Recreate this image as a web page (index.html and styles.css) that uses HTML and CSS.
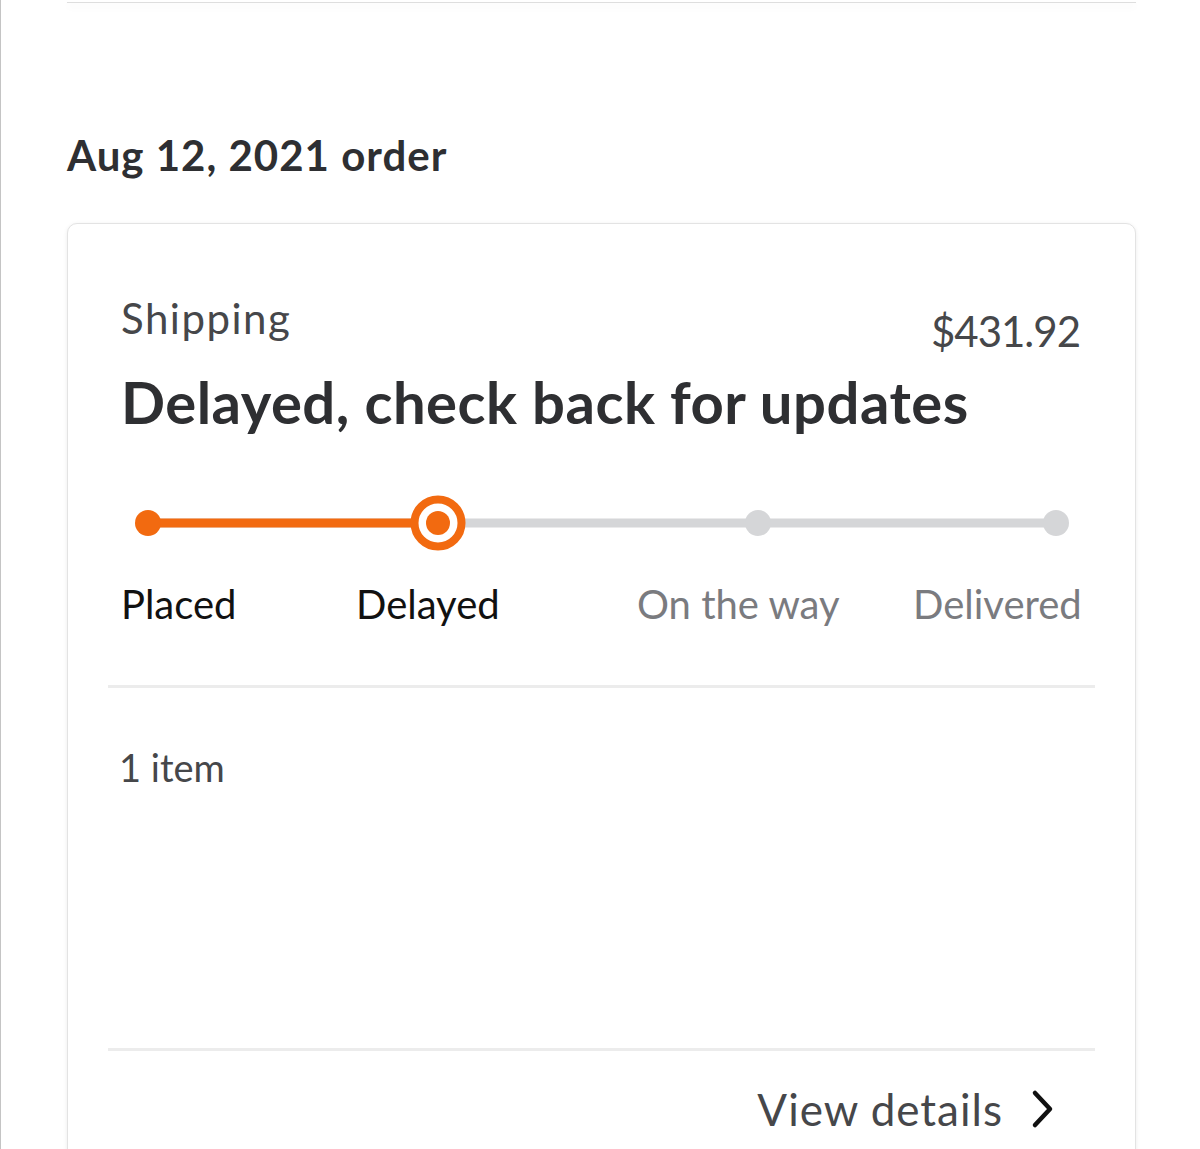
FILE: index.html
```html
<!DOCTYPE html>
<html lang="en">
  <head>
    <meta charset="UTF-8" />
    <meta name="viewport" content="width=device-width, initial-scale=1.0" />
    <title>Order status</title>
    <link rel="stylesheet" href="styles.css">
  </head>
  <body>
    <div class="page">
      <div class="prev-card"></div>

      <h2 class="order-date">Aug 12, 2021 order</h2>

      <div class="order-card">
        <div class="status">
          <div class="status-top">
            <span class="status-label">Shipping</span>
            <span class="status-price">$431.92</span>
          </div>
          <h3 class="status-title">Delayed, check back for updates</h3>

          <svg class="tracker" width="958" height="60" viewBox="0 0 958 60">
            <line x1="25" y1="30" x2="933" y2="30" stroke="#d5d6d8" stroke-width="9" />
            <line x1="25" y1="30" x2="315" y2="30" stroke="#f26a10" stroke-width="9" />
            <circle cx="25" cy="30" r="13" fill="#f26a10" />
            <circle cx="315" cy="30" r="23.5" fill="#fff" stroke="#f26a10" stroke-width="8" />
            <circle cx="315" cy="30" r="12" fill="#f26a10" />
            <circle cx="635" cy="30" r="13" fill="#d5d6d8" />
            <circle cx="933" cy="30" r="13" fill="#d5d6d8" />
          </svg>

          <div class="steps">
            <span class="step done">Placed</span>
            <span class="step done">Delayed</span>
            <span class="step">On the way</span>
            <span class="step last">Delivered</span>
          </div>
        </div>

        <div class="items">1 item</div>

        <a class="details" href="#">
          View details
          <svg width="24" height="40" viewBox="0 0 24 40">
            <path d="M4 4 L19 20 L4 36" fill="none" stroke="#111" stroke-width="4.5" stroke-linecap="round" stroke-linejoin="round" />
          </svg>
        </a>
      </div>
    </div>
  </body>
</html>
```

FILE: styles.css
```css
body {
  margin: 0;
  background-color: #fff;
  font-family: "Lato", "Noto Sans", sans-serif;
  color: #2e2f32;
  border-left: 1px solid #c4c4c4;
  height: 1149px;
  overflow: hidden;
  box-sizing: border-box;
}

.page {
  padding: 0 64px 0 66px;
}

.prev-card {
  height: 2px;
  border-bottom: 1px solid #dedede;
  box-shadow: 0 4px 8px rgba(0, 0, 0, 0.04);
}

.order-date {
  margin: 124px 0 0 0;
  font-size: 42px;
  font-weight: 700;
  letter-spacing: 1px;
  line-height: 56px;
  color: #2e2f32;
}

.order-card {
  margin-top: 40px;
  border: 1px solid #e3e3e3;
  border-radius: 10px;
  box-shadow: 0 1px 4px rgba(0, 0, 0, 0.08);
  padding: 0 40px;
  background-color: #fff;
}

.status {
  padding: 66px 15px 56px;
  border-bottom: 3px solid #ececec;
}

.status-top {
  display: flex;
  justify-content: space-between;
  align-items: flex-end;
}

.status-label {
  font-size: 42px;
  letter-spacing: 1.5px;
  line-height: 56px;
  color: #46474a;
  margin-left: -2px;
}

.status-price {
  font-size: 42px;
  letter-spacing: -1px;
  line-height: 56px;
  color: #46474a;
  position: relative;
  top: 13px;
}

.status-title {
  margin: 20px 0 0 -2px;
  font-size: 58px;
  font-weight: 700;
  letter-spacing: 0.5px;
  line-height: 72px;
  color: #2e2f32;
}

.tracker {
  display: block;
  margin-top: 55px;
}

.steps {
  display: grid;
  grid-template-columns: 235px 281px 276px 1fr;
  margin-top: 26px;
  margin-left: -2px;
}

.step {
  font-size: 40px;
  line-height: 50px;
  color: #7a7b7f;
}

.step.done {
  color: #111;
}

.step.last {
  text-align: right;
}

.items {
  padding: 54px 13px 0 11px;
  height: 306px;
  font-size: 38px;
  line-height: 50px;
  color: #46474a;
  border-bottom: 3px solid #ececec;
}

.details {
  display: flex;
  justify-content: flex-end;
  align-items: center;
  gap: 28px;
  padding: 30px 40px 40px 0;
  font-size: 44px;
  letter-spacing: 1px;
  line-height: 56px;
  color: #46474a;
  text-decoration: none;
}
```
